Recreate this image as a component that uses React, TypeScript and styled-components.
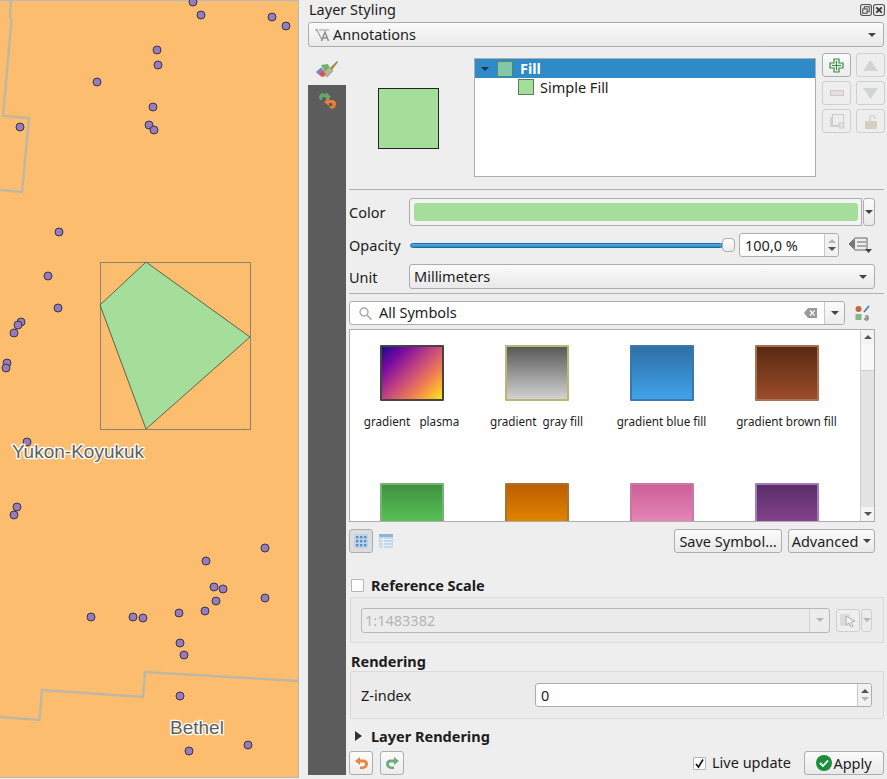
import React from "react";
import styled, { createGlobalStyle } from "styled-components";

const Global = createGlobalStyle`
  html, body { margin: 0; padding: 0; background: #eeeeee; }
  body { font-family: "Noto Sans", "Open Sans", sans-serif; font-size: 14.5px; color: #1c1c1c; }
  * { box-sizing: border-box; }
`;

const Root = styled.div`
  width: 887px; height: 779px; display: flex; overflow: hidden; background: #eeeeee;
`;
const MapPane = styled.div`
  width: 299px; height: 778px; flex: none; background: #fdbd6e;
  border-top: 1px solid #b9b9b9; border-right: 1px solid #b9b9b9; border-bottom: 1px solid #b9b9b9;
`;
const MapSvg = styled.svg`display: block; margin-top: -1px;`;
const MapLabel = styled.text`
  font-family: "Liberation Sans", Arial, sans-serif; font-size: 19px; fill: #5e5e5e;
  stroke: #ffffff; stroke-width: 2.6px; paint-order: stroke; stroke-linejoin: round;
`;

const Panel = styled.div`
  flex: 1; display: flex; flex-direction: column; padding: 0 3px 0 9px; min-width: 0;
`;
const TitleBar = styled.div`
  height: 22px; display: flex; align-items: center; justify-content: space-between;
  padding: 0 0 3px 1px; margin-right: -1px;
`;
const Title = styled.span`line-height: 20px; margin-top: -2px;`;
const TitleIcons = styled.div`display: flex; gap: 1px;`;
const Combo = styled.div`
  height: 25px; display: flex; align-items: center; gap: 2px; padding: 0 7px 0 6px;
  border: 1px solid #adadad; border-radius: 3px;
  background: linear-gradient(#fbfbfb, #e9e9e9); flex: 1; min-width: 0;
`;
const LayerCombo = styled(Combo)`flex: none;`;
const UnitCombo = styled(Combo)`padding-left: 4px;`;
const ComboText = styled.span`flex: 1; margin-top: -2px;`;
const Caret = styled.span<{ $light?: boolean }>`
  width: 0; height: 0; flex: none; border-left: 4px solid transparent; border-right: 4px solid transparent;
  border-top: 4px solid ${(p) => (p.$light ? "#b5b5b5" : "#444")};
`;
const Body = styled.div`display: flex; margin-top: 6px; height: 722px;`;
const Side = styled.div`width: 38px; flex: none; display: flex; flex-direction: column;`;
const SideTab = styled.div`height: 32px; display: flex; align-items: center; justify-content: center; padding-top: 1px;`;
const SideDark = styled.div`flex: 1; background: #5c5c5c; display: flex; justify-content: center; padding-top: 5px; align-items: flex-start;`;
const Main = styled.div`width: 536px; margin-left: 3px; display: flex; flex-direction: column;`;
const SymbolTop = styled.div`height: 130px; display: flex; flex: none;`;
const Preview = styled.div`
  width: 61px; height: 61px; margin: 35px 35px 0 29px; background: #a5dd9b; border: 1px solid #232323;
`;
const Tree = styled.div`
  width: 342px; height: 119px; margin-top: 5px; background: #fff; border: 1px solid #adadad;
`;
const TreeRowSelected = styled.div`
  height: 19px; background: #2e8bc8; color: #fff; font-weight: 700; display: flex; align-items: center;
  padding-left: 6px; gap: 7px;
`;
const FillName = styled.span`margin-top: -2px;`;
const TreeCaret = styled.span`
  width: 0; height: 0; border-left: 4px solid transparent; border-right: 4px solid transparent;
  border-top: 4px solid #16324a; margin-right: 1px;
`;
const TreeRow = styled.div`height: 20px; display: flex; align-items: center; padding-left: 43px; gap: 6px; margin-top: -1px;`;
const TreeSwatch = styled.span<{ $c: string; $b: string }>`
  width: 16px; height: 16px; background: ${(p) => p.$c}; border: 1px solid ${(p) => p.$b};
`;
const TreeButtons = styled.div`
  display: grid; grid-template-columns: 29px 29px; grid-auto-rows: 24px; column-gap: 5px; row-gap: 4px; margin-left: 6px;
`;
const IconButton = styled.div<{ $off?: boolean }>`
  display: flex; align-items: center; justify-content: center; border-radius: 3px;
  border: 1px solid ${(p) => (p.$off ? "#cfcfcf" : "#adadad")};
  background: ${(p) => (p.$off ? "#eeeeee" : "linear-gradient(#fbfbfb,#ededed)")};
`;
const PickerButton = styled(IconButton)`width: 24px; height: 23px; flex: none;`;
const Separator = styled.div<{ $top: number }>`
  height: 1px; background: #b0b0b0; margin-top: ${(p) => p.$top}px; flex: none; margin-right: 1px;
`;
const FormRow = styled.div<{ $top: number; $h: number; $right?: number }>`
  display: flex; align-items: center; flex: none; margin-top: ${(p) => p.$top}px; height: ${(p) => p.$h}px;
  padding-right: ${(p) => p.$right ?? 10}px;
`;
const RowLabel = styled.span`width: 60px; flex: none;`;
const ColorButton = styled.div`
  flex: 1; height: 28px; border: 1px solid #adadad; border-radius: 3px 0 0 3px; padding: 4px 3px 4px 4px;
  background: #f3f3f3;
`;
const ColorFill = styled.div`height: 100%; background: #a5dd9b; border-radius: 3px;`;
const ColorDrop = styled.div`
  width: 12px; height: 28px; margin-left: 1px; border: 1px solid #adadad; border-radius: 3px;
  background: linear-gradient(#fbfbfb,#e9e9e9); display: flex; align-items: center; justify-content: center;
`;
const SliderTrack = styled.div`
  width: 313px; margin-left: 1px; height: 5px; background: linear-gradient(#55aee6,#2e8bc8); border: 1px solid #1f6a9e; border-radius: 3px;
`;
const SliderThumb = styled.div`
  width: 13px; height: 14px; margin-left: -1px; flex: none; background: linear-gradient(#fdfdfd,#ececec); border: 1px solid #adadad; border-radius: 4px;
`;
const SpinBox = styled.div<{ $w: number; $left: number }>`
  width: ${(p) => p.$w}px; margin-left: ${(p) => p.$left}px; height: 24px; display: flex; align-items: stretch;
  border: 1px solid #adadad; border-radius: 3px; background: #fff; flex: none;
`;
const SpinText = styled.span`flex: 1; padding-left: 5px; line-height: 22px;`;
const SpinArrows = styled.div`
  width: 14px; border-left: 1px solid #c8c8c8; background: #f1f1f1; display: flex; flex-direction: column;
  align-items: center; justify-content: center; gap: 4px; border-radius: 0 3px 3px 0;
`;
const UpArrow = styled.span<{ $light?: boolean }>`
  width: 0; height: 0; border-left: 4px solid transparent; border-right: 4px solid transparent;
  border-bottom: 4px solid ${(p) => (p.$light ? "#b5b5b5" : "#555")};
`;
const DownArrow = styled.span<{ $light?: boolean }>`
  width: 0; height: 0; border-left: 4px solid transparent; border-right: 4px solid transparent;
  border-top: 4px solid ${(p) => (p.$light ? "#b5b5b5" : "#555")};
`;
const SearchBox = styled.div`
  width: 496px; height: 24px; background: #fff; border: 1px solid #adadad; border-radius: 3px; display: flex; align-items: center;
  padding-left: 9px; flex: none;
`;
const SearchText = styled.span`flex: 1; margin: -2px 0 0 7px;`;
const SearchDrop = styled.div`
  width: 20px; height: 22px; border-left: 1px solid #c8c8c8; background: linear-gradient(#fbfbfb,#ececec);
  display: flex; align-items: center; justify-content: center; margin-left: 7px; border-radius: 0 3px 3px 0;
`;
const SymbolList = styled.div`
  width: 526px; height: 193px; margin-top: 4px; flex: none; background: #fff; border: 1px solid #adadad; display: flex; overflow: hidden;
`;
const SymbolGrid = styled.div`
  flex: 1; display: grid; grid-template-columns: repeat(4, 125px); grid-auto-rows: 138px; padding-top: 15px; margin-left: -1px; overflow: hidden;
`;
const SymbolCell = styled.div`display: flex; flex-direction: column; align-items: center;`;
const Swatch = styled.div<{ $bg: string; $b: string }>`
  width: 64px; height: 56px; background: ${(p) => p.$bg}; border: 2px solid ${(p) => p.$b}; border-radius: 1px; flex: none;
`;
const SymbolName = styled.span`
  font-size: 11.7px; margin-top: 12px; white-space: pre; line-height: 17px;
`;
const Scroll = styled.div`width: 14px; flex: none; border-left: 1px solid #cfcfcf; background: #e3e3e3; display: flex; flex-direction: column;`;
const ScrollEnd = styled.div`height: 14px; background: #f4f4f4; display: flex; align-items: center; justify-content: center; flex: none;`;
const ScrollThumb = styled.div`height: 27px; background: #f8f8f8; border-bottom: 1px solid #cfcfcf; flex: none;`;
const ScrollFill = styled.div`flex: 1;`;
const ToggleButton = styled.div<{ $on?: boolean }>`
  width: 24px; height: 24px; display: flex; align-items: center; justify-content: center; flex: none; border-radius: 3px;
  border: 1px solid ${(p) => (p.$on ? "#adadad" : "transparent")}; background: ${(p) => (p.$on ? "#dcdcdc" : "transparent")};
`;
const Spacer = styled.div`flex: 1;`;
const PushButton = styled.div<{ $w: number }>`
  width: ${(p) => p.$w}px; height: 24px; border: 1px solid #adadad; border-radius: 3px; background: linear-gradient(#fbfbfb,#e9e9e9);
  display: flex; align-items: center; justify-content: center; gap: 5px; flex: none; white-space: nowrap;
`;
const CheckBox = styled.span<{ $w: number }>`
  width: ${(p) => p.$w}px; height: ${(p) => p.$w}px; background: #fff; border: 1px solid #b5b5b5; border-radius: 1px; flex: none;
  display: inline-flex; align-items: center; justify-content: center;
`;
const SectionTitle = styled.span`font-weight: 700; margin-top: -1px;`;
const GroupBox = styled.div<{ $top: number; $h: number }>`
  height: ${(p) => p.$h}px; margin: ${(p) => p.$top}px 1px 0 1px; flex: none; background: #ebebeb; border: 1px solid #dadada; border-radius: 2px;
  display: flex; align-items: center; padding: 0 12px 0 10px;
`;
const DisabledField = styled.div`
  width: 469px; height: 25px; border: 1px solid #b8b8b8; border-radius: 3px; background: #ececec; display: flex; align-items: center; color: #b4b4b4; padding-left: 3px; flex: none;
`;
const DisabledDrop = styled.div`
  margin-left: auto; width: 20px; height: 23px; border-left: 1px solid #d2d2d2; display: flex; align-items: center; justify-content: center;
`;
const SmallDrop = styled.div`
  width: 11px; height: 23px; margin-left: 1px; border: 1px solid #cfcfcf; border-radius: 3px; display: flex; align-items: center; justify-content: center; flex: none;
`;
const FieldLabel = styled.span`width: 174px; flex: none;`;
const Triangle = styled.span`
  width: 0; height: 0; margin: 0 9px 0 6px; border-top: 5px solid transparent; border-bottom: 5px solid transparent; border-left: 7px solid #333; flex: none;
`;
const LiveLabel = styled.span`margin: -2px 13px 0 6px;`;
const UndoButton = styled(IconButton)`width: 24px; height: 24px; flex: none;`;
const Gap = styled.div<{ $w: number }>`width: ${(p) => p.$w}px; flex: none;`;
const Icon = styled.svg`display: block; flex: none; overflow: visible;`;
const ApplyIcon = styled(Icon)`margin-right: -4px;`;

const points: [number, number][] = [
  [193, 2], [201, 15], [272, 17], [286, 26], [157, 50], [158, 65], [97, 82], [153, 107], [149, 125], [154, 130], [20, 127], [59, 232],
  [48, 276], [58, 308], [21, 322], [18, 325], [14, 333], [7, 363], [6, 368], [27, 442], [17, 507], [14, 515],
  [265, 548], [206, 561], [214, 587], [223, 589], [216, 601], [265, 598], [205, 611], [179, 613], [91, 617], [133, 617], [143, 618],
  [180, 643], [184, 655], [180, 696], [248, 745], [189, 751],
];

const symbols = [
  { id: "plasma", n: "gradient   plasma", bg: "linear-gradient(135deg,#1f0a8c 0%,#7a0aa0 22%,#c4467f 48%,#ee7b52 70%,#fec02c 90%,#f6e71f 100%)", b: "#444" },
  { id: "gray", n: "gradient  gray fill", bg: "linear-gradient(#595959,#d2d2d2)", b: "#b9b872" },
  { id: "blue", n: "gradient blue fill", bg: "linear-gradient(#2f6fa6,#3fa3ea)", b: "#3a78ab" },
  { id: "brown", n: "gradient brown fill", bg: "linear-gradient(#592a12,#9c4c2a)", b: "#a9704f" },
  { id: "green", n: "", bg: "linear-gradient(#3f9240,#64d460)", b: "#75b475" },
  { id: "orange", n: "", bg: "linear-gradient(#bd5e00,#f09500)", b: "#a97132" },
  { id: "pink", n: "", bg: "linear-gradient(#cd5f97,#f095c4)", b: "#c87aa6" },
  { id: "purple", n: "", bg: "linear-gradient(#582e68,#974b9e)", b: "#a27cb2" },
];

const BrushIcon = () => (
  <Icon width="24" height="22" viewBox="0 0 24 22">
    <path d="M1 13 L8 7 L14 13 L9 19 Z" fill="#d9d4b8" />
    <path d="M1 13 L6 8.5 L8 11 L3 15 Z" fill="#5a8fd0" />
    <path d="M3 15 L8 11 L11 16 L7 18 Z" fill="#d8525c" />
    <path d="M6 6 L13 5 L15 10 L10 13 Z" fill="#6bb26a" />
    <path d="M9 13 L14 8 L18 12 L12 18 Z" fill="#b9b49a" stroke="#88846c" strokeWidth="0.6" />
    <path d="M15 9 L22 2 L23 3 L17 11 Z" fill="#a08a42" />
  </Icon>
);
const HistoryIcon = () => (
  <Icon width="21" height="21" viewBox="0 0 21 21">
    <path d="M2 8 C2 3 7 2 9 5 L9 2 L14 7 L9 11 L9 8 C7 6 5 7 5 10 L3 10 Z" fill="#63a86a" />
    <path d="M19 14 C19 19 14 20 12 17 C13 16 14 16 15 16 C16 16 16 13 14 13 L12 13 L12 16 L7 12 L12 8 L12 10 L15 10 C18 10 19 12 19 14 Z" fill="#e5813a" />
  </Icon>
);
const UndoIcon = () => (
  <Icon width="15" height="14" viewBox="0 0 15 14">
    <path d="M1 5 L6 1 L6 3.5 L9 3.5 C13 3.5 14 6 14 8 C14 11 11 13 8 13 L6 13 L6 10.5 L8.5 10.5 C10 10.5 11 9.5 11 8.2 C11 7 10 6.5 9 6.5 L6 6.5 L6 9 Z" fill="#e5873f" />
  </Icon>
);
const RedoIcon = () => (
  <Icon width="15" height="14" viewBox="0 0 15 14">
    <path d="M14 5 L9 1 L9 3.5 L6 3.5 C2 3.5 1 6 1 8 C1 11 4 13 7 13 L9 13 L9 10.5 L6.5 10.5 C5 10.5 4 9.5 4 8.2 C4 7 5 6.5 6 6.5 L9 6.5 L9 9 Z" fill="#6fab7a" />
  </Icon>
);
const GridIcon = () => (
  <Icon width="14" height="14" viewBox="0 0 14 14">
    <rect width="14" height="14" fill="#bcd2ea" rx="1" />
    {[2, 6, 10].map((y) => [2, 6, 10].map((x) => <rect key={`${x}-${y}`} x={x} y={y} width="2.4" height="2.4" fill="#5a8ec6" />))}
  </Icon>
);
const TableIcon = () => (
  <Icon width="14" height="14" viewBox="0 0 14 14">
    <rect width="14" height="14" fill="#c4d8ec" rx="1" />
    <rect x="0" y="0" width="14" height="3" fill="#8fb4da" />
    {[5, 8, 11].map((y) => <rect key={y} x="1" y={y} width="12" height="1" fill="#eaf1f8" />)}
    <rect x="4" y="3" width="1" height="11" fill="#eaf1f8" />
  </Icon>
);

export default function App() {
  return (
    <Root>
      <Global />
      <MapPane>
        <MapSvg width="298" height="778" viewBox="0 0 298 778">
          <g fill="none" stroke="#bdb8a4" strokeWidth="2.4">
            <polyline points="11,0 10,17 11.5,20 3,116 29,118 22,192 0,190" />
            <polyline points="0,717 39.5,720 42,690 143,697 145,672 298,681" />
          </g>
          {points.map(([x, y]) => (
            <circle key={`${x}-${y}`} cx={x} cy={y} r="4" fill="#967cbb" stroke="#3a3348" strokeWidth="1" />
          ))}
          <rect x="100.5" y="262.5" width="150" height="167" fill="none" stroke="#8a8273" strokeWidth="1" />
          <polygon points="146,262 250,337 146,429 100,305" fill="#a5dd9b" stroke="#3c4a38" strokeWidth="0.8" />
          <MapLabel x="12" y="458">Yukon-Koyukuk</MapLabel>
          <MapLabel x="170" y="734">Bethel</MapLabel>
        </MapSvg>
      </MapPane>
      <Panel>
        <TitleBar>
          <Title>Layer Styling</Title>
          <TitleIcons>
            <Icon width="12" height="12" viewBox="0 0 11 11">
              <rect x="0.5" y="0.5" width="10" height="10" rx="2" fill="#e6e6e6" stroke="#555" />
              <rect x="4" y="2.5" width="4.5" height="4.5" fill="none" stroke="#555" />
              <rect x="2.5" y="4.5" width="4" height="4" fill="#e6e6e6" stroke="#555" />
            </Icon>
            <Icon width="12" height="12" viewBox="0 0 11 11">
              <rect x="0.5" y="0.5" width="10" height="10" rx="2" fill="#e6e6e6" stroke="#555" />
              <path d="M3 3 L8 8 M8 3 L3 8" stroke="#333" strokeWidth="1.6" />
            </Icon>
          </TitleIcons>
        </TitleBar>
        <LayerCombo>
          <Icon width="16" height="14" viewBox="0 0 16 14">
            <path d="M2 2 L7 12" stroke="#8a8a8a" strokeWidth="1" fill="none" />
            <circle cx="1.5" cy="2" r="1.2" fill="#a5a5a5" />
            <path d="M4 2 L14 2" stroke="#999" strokeWidth="1" />
            <path d="M6.5 13 L10 4 L13.5 13 M8 10 H12" stroke="#8f8f8f" strokeWidth="1.5" fill="none" />
          </Icon>
          <ComboText>Annotations</ComboText>
          <Caret />
        </LayerCombo>
        <Body>
          <Side>
            <SideTab><BrushIcon /></SideTab>
            <SideDark><HistoryIcon /></SideDark>
          </Side>
          <Main>
            <SymbolTop>
              <Preview />
              <Tree>
                <TreeRowSelected>
                  <TreeCaret />
                  <TreeSwatch $c="#85c6a9" $b="#4b8a79" />
                  <FillName>Fill</FillName>
                </TreeRowSelected>
                <TreeRow>
                  <TreeSwatch $c="#a5dd9b" $b="#5a7d5a" />
                  <span>Simple Fill</span>
                </TreeRow>
              </Tree>
              <TreeButtons>
                <IconButton>
                  <Icon width="15" height="15" viewBox="0 0 15 15">
                    <path d="M5 1 H10 V5 H14 V10 H10 V14 H5 V10 H1 V5 H5 Z" fill="#e4f1e1" stroke="#3f8a4b" strokeWidth="1.2" />
                    <path d="M7.5 3 V12 M3 7.5 H12" stroke="#3f8a4b" strokeWidth="1" />
                  </Icon>
                </IconButton>
                <IconButton $off>
                  <Icon width="15" height="11" viewBox="0 0 15 11"><path d="M7.5 0 L15 11 H0 Z" fill="#cfd4d8" /></Icon>
                </IconButton>
                <IconButton $off>
                  <Icon width="14" height="6" viewBox="0 0 14 6"><rect x="0.5" y="0.5" width="13" height="5" fill="#e8dcdc" stroke="#d2c8c8" /></Icon>
                </IconButton>
                <IconButton $off>
                  <Icon width="15" height="11" viewBox="0 0 15 11"><path d="M0 0 H15 L7.5 11 Z" fill="#cfd4d8" /></Icon>
                </IconButton>
                <IconButton $off>
                  <Icon width="14" height="14" viewBox="0 0 14 14">
                    <rect x="0" y="3" width="10" height="10" fill="#d2d2d2" />
                    <rect x="2.5" y="0.5" width="11" height="11" fill="#ececec" stroke="#cccccc" />
                    <rect x="9" y="9" width="5" height="5" fill="#e2e2dc" stroke="#cccccc" />
                  </Icon>
                </IconButton>
                <IconButton $off>
                  <Icon width="14" height="15" viewBox="0 0 14 15">
                    <path d="M6 7 V4 C6 1 11 1 11 4 V5" stroke="#d8d8d8" strokeWidth="2" fill="none" />
                    <rect x="1" y="7" width="12" height="8" rx="1" fill="#d3d0bf" />
                  </Icon>
                </IconButton>
              </TreeButtons>
            </SymbolTop>
            <Separator $top={6} />
            <FormRow $top={8} $h={28}>
              <RowLabel>Color</RowLabel>
              <ColorButton><ColorFill /></ColorButton>
              <ColorDrop><Caret /></ColorDrop>
            </FormRow>
            <FormRow $top={7} $h={24}>
              <RowLabel>Opacity</RowLabel>
              <SliderTrack />
              <SliderThumb />
              <SpinBox $w={100} $left={4}>
                <SpinText>100,0 %</SpinText>
                <SpinArrows><UpArrow $light /><DownArrow /></SpinArrows>
              </SpinBox>
              <Gap $w={9} />
              <Icon width="24" height="16" viewBox="0 0 24 16">
                <path d="M7 1 H19 V13 H7 L1 7 Z" fill="#ededed" stroke="#666" strokeWidth="1" />
                <path d="M1 7 L7 2 V12 Z" fill="#777" />
                <path d="M9 5 H18 M9 9 H18" stroke="#666" strokeWidth="1" />
                <path d="M17 12 H24 L20.5 16 Z" fill="#444" />
              </Icon>
            </FormRow>
            <FormRow $top={7} $h={25}>
              <RowLabel>Unit</RowLabel>
              <UnitCombo>
                <ComboText>Millimeters</ComboText>
                <Caret />
              </UnitCombo>
            </FormRow>
            <Separator $top={4} />
            <FormRow $top={7} $h={24} $right={0}>
              <SearchBox>
                <Icon width="13" height="13" viewBox="0 0 13 13">
                  <circle cx="5" cy="5" r="4" fill="none" stroke="#a5a5a5" strokeWidth="1.3" />
                  <path d="M8 8 L12.5 12.5" stroke="#a5a5a5" strokeWidth="1.5" />
                </Icon>
                <SearchText>All Symbols</SearchText>
                <Icon width="13" height="10" viewBox="0 0 13 10">
                  <path d="M4 0 H13 V10 H4 L0 5 Z" fill="#9a9a9a" />
                  <path d="M6 2.5 L10.5 7.5 M10.5 2.5 L6 7.5" stroke="#fff" strokeWidth="1.2" />
                </Icon>
                <SearchDrop><Caret /></SearchDrop>
              </SearchBox>
              <Gap $w={10} />
              <Icon width="16" height="16" viewBox="0 0 16 16">
                <circle cx="3.5" cy="4" r="3" fill="#c9683a" />
                <rect x="0.5" y="9" width="6" height="6" fill="#86b58a" />
                <path d="M9 7 L14 1" stroke="#4a77a8" strokeWidth="1.6" />
                <path d="M10 11 H13 V15 H10 V13 H13" stroke="#666" strokeWidth="1" fill="none" />
              </Icon>
            </FormRow>
            <SymbolList>
              <SymbolGrid>
                {symbols.map((s) => (
                  <SymbolCell key={s.id}>
                    <Swatch $bg={s.bg} $b={s.b} />
                    {s.n && <SymbolName>{s.n}</SymbolName>}
                  </SymbolCell>
                ))}
              </SymbolGrid>
              <Scroll>
                <ScrollEnd><UpArrow /></ScrollEnd>
                <ScrollThumb />
                <ScrollFill />
                <ScrollEnd><DownArrow /></ScrollEnd>
              </Scroll>
            </SymbolList>
            <FormRow $top={7} $h={24}>
              <ToggleButton $on><GridIcon /></ToggleButton>
              <Gap $w={1} />
              <ToggleButton><TableIcon /></ToggleButton>
              <Spacer />
              <PushButton $w={108}>Save Symbol…</PushButton>
              <Gap $w={6} />
              <PushButton $w={87}>Advanced<Caret /></PushButton>
            </FormRow>
            <FormRow $top={25} $h={14}>
              <Gap $w={2} />
              <CheckBox $w={13} />
              <Gap $w={7} />
              <SectionTitle>Reference Scale</SectionTitle>
            </FormRow>
            <GroupBox $top={5} $h={46}>
              <DisabledField>
                1:1483382
                <DisabledDrop><Caret $light /></DisabledDrop>
              </DisabledField>
              <Gap $w={6} />
              <PickerButton $off>
                <Icon width="16" height="13" viewBox="0 0 16 13">
                  <rect x="0" y="0" width="10" height="12" fill="#dcdcdc" />
                  <path d="M6 2 L15 7 L11 8 L13 12 L11 13 L9 9 L6 11 Z" fill="#f2f2f2" stroke="#b0b0b0" />
                </Icon>
              </PickerButton>
              <SmallDrop><Caret $light /></SmallDrop>
            </GroupBox>
            <FormRow $top={8} $h={20}>
              <Gap $w={2} />
              <SectionTitle>Rendering</SectionTitle>
            </FormRow>
            <GroupBox $top={0} $h={48}>
              <FieldLabel>Z-index</FieldLabel>
              <SpinBox $w={337} $left={0}>
                <SpinText>0</SpinText>
                <SpinArrows><UpArrow /><DownArrow $light /></SpinArrows>
              </SpinBox>
            </GroupBox>
            <FormRow $top={7} $h={20}>
              <Triangle />
              <SectionTitle>Layer Rendering</SectionTitle>
            </FormRow>
            <FormRow $top={5} $h={24} $right={1}>
              <UndoButton><UndoIcon /></UndoButton>
              <Gap $w={7} />
              <UndoButton><RedoIcon /></UndoButton>
              <Spacer />
              <CheckBox $w={13}>
                <Icon width="9" height="9" viewBox="0 0 9 9"><path d="M1 5 L3.5 8 L8 0.5" fill="none" stroke="#111" strokeWidth="1.6" /></Icon>
              </CheckBox>
              <LiveLabel>Live update</LiveLabel>
              <PushButton $w={80}>
                <ApplyIcon width="16" height="16" viewBox="0 0 16 16">
                  <circle cx="8" cy="8" r="8" fill="#1c8f3a" />
                  <path d="M4 8 L7 11 L12 5.5" fill="none" stroke="#fff" strokeWidth="1.8" />
                </ApplyIcon>
                Apply
              </PushButton>
            </FormRow>
          </Main>
        </Body>
      </Panel>
    </Root>
  );
}
